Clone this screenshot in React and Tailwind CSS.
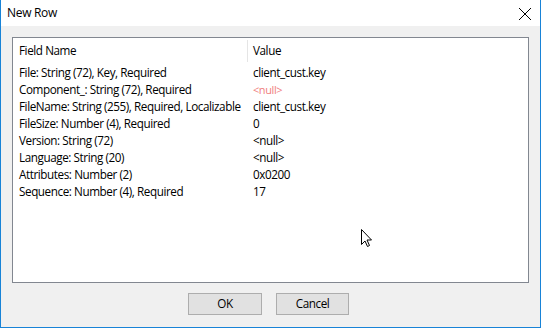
import React from "react";

const rows = [
  ["File: String (72), Key, Required", "client_cust.key"],
  ["Component_: String (72), Required", "<null>", true],
  ["FileName: String (255), Required, Localizable", "client_cust.key"],
  ["FileSize: Number (4), Required", "0"],
  ["Version: String (72)", "<null>"],
  ["Language: String (20)", "<null>"],
  ["Attributes: Number (2)", "0x0200"],
  ["Sequence: Number (4), Required", "17"],
];

export default function App() {
  return (
    <div
      className="relative w-[541px] h-[328px] flex flex-col bg-[#f0f0f0] border border-t-0 border-[#1883d7] text-[11.7px] tracking-[-0.42px] text-black overflow-hidden"
      style={{ fontFamily: '"Open Sans", "Liberation Sans", sans-serif' }}
    >
      <div className="h-[26px] bg-white flex items-center justify-between pl-[6px] pr-[8px] shrink-0">
        <span className="leading-none text-[12px] tracking-[-0.3px]">New Row</span>
        <svg width="14" height="14" viewBox="0 0 14 14" className="mt-[2px]">
          <path d="M1 1L13 13M13 1L1 13" stroke="#000" strokeWidth="1" />
        </svg>
      </div>
      <div className="flex-1 flex flex-col px-[11px] pt-[11px]">
        <div className="h-[246px] bg-white border border-[#828790] flex flex-col pl-[6px]">
          <div className="flex h-[23px] items-center mt-[1px]">
            <div className="w-[228px] leading-none">Field Name</div>
            <div className="w-px h-[22px] bg-[#e5e5e5]"></div>
            <div className="pl-[5px] leading-none">Value</div>
          </div>
          <div className="flex flex-col pt-[2px]">
            {rows.map(([f, v, red], i) => (
              <div key={i} className="flex h-[17px] items-center leading-none">
                <div className="w-[229px] whitespace-nowrap">{f}</div>
                <div className={"pl-[5px] " + (red ? "text-[#f08080] text-[11px]" : "")}>{v}</div>
              </div>
            ))}
          </div>
        </div>
        <div className="flex justify-center gap-[14px] mt-[10px] pr-[4px]">
          <button className="w-[74px] h-[22px] bg-[#e1e1e1] border border-[#adadad] leading-none">OK</button>
          <button className="w-[73px] h-[22px] bg-[#e1e1e1] border border-[#adadad] leading-none">Cancel</button>
        </div>
      </div>
      <svg className="absolute left-[360px] top-[229px]" width="12" height="19" viewBox="0 0 12 19">
        <path d="M0.5 0.5L0.5 15.5L4 12L6.5 17.5L8.5 16.5L6 11L10.5 11Z" fill="#fff" stroke="#000" strokeWidth="1" strokeLinejoin="miter" />
      </svg>
    </div>
  );
}
